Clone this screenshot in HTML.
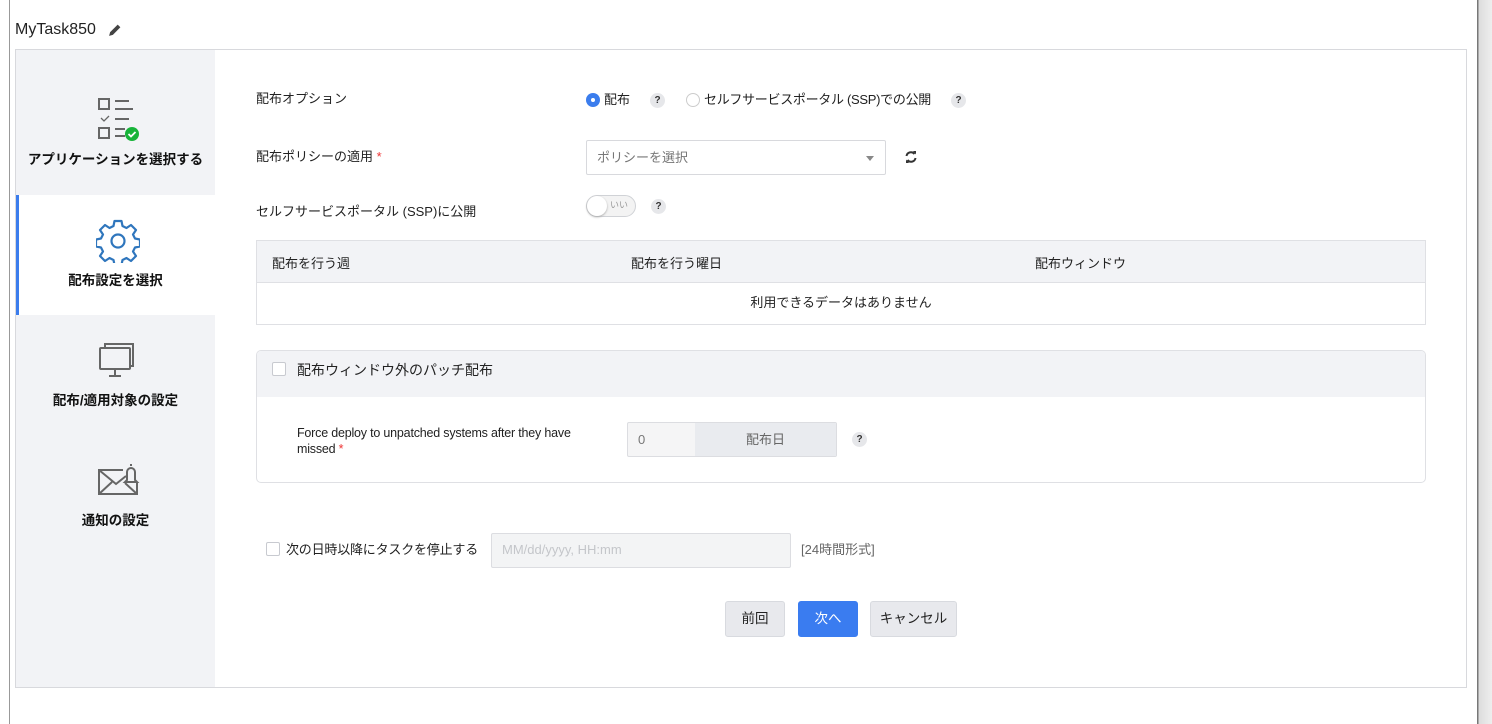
<!DOCTYPE html>
<html><head><meta charset="utf-8"><style>
*{box-sizing:border-box;margin:0;padding:0}
body{width:1492px;height:724px;background:#fff;position:relative;overflow:hidden;font-family:"Liberation Sans","Noto Sans CJK JP",sans-serif;color:#222;font-size:13px;line-height:15px}
.a{position:absolute}
.q{position:absolute;width:15px;height:15px;border-radius:50%;background:#e6e7ea;font-size:10px;font-weight:bold;text-align:center;line-height:15px;color:#333}
.nav{position:absolute;left:16px;width:199px;height:120px;text-align:center;font-weight:bold;font-size:13.5px;color:#111}
.nav svg{position:absolute;left:80px;top:44px}
.nav span{position:absolute;left:0;right:0}
.cb{position:absolute;width:14px;height:14px;border:1px solid #c8cad0;border-radius:2px;background:#fff}
.btn{position:absolute;top:601px;height:36px;border-radius:3px;text-align:center;line-height:34px;font-size:13.5px;border:1px solid #d8dadf;background:#e8e9ed}
</style></head><body>
<div class="a" style="left:9px;top:0;width:1px;height:724px;background:#999"></div>
<div class="a" style="left:1477px;top:0;width:15px;height:724px;background:linear-gradient(90deg,#777 0,#777 1px,#ddd 2px,#eee 100%)"></div>
<div class="a" style="left:15px;top:21px;font-size:16px;line-height:18px;color:#222">MyTask850</div>
<svg class="a" style="left:108px;top:23px" width="14" height="14" viewBox="0 0 13 13"><path d="M1 12l1-3.5L9 1.5l2.5 2.5L4.5 11z" fill="#444"/></svg>
<div class="a" style="left:15px;top:49px;width:1452px;height:639px;border:1px solid #d8d9dd;background:#fff"></div>
<div class="a" style="left:16px;top:50px;width:199px;height:637px;background:#f2f3f6"></div>
<div class="a" style="left:16px;top:195px;width:199px;height:120px;background:#fff;border-left:3px solid #3b7ded"></div>

<div class="nav" style="top:75px">
<svg width="44" height="46" viewBox="0 0 44 46" style="left:81px;top:22px"><g fill="none" stroke="#666" stroke-width="2"><rect x="2" y="2" width="10" height="10"/><rect x="2" y="31" width="10" height="10"/><path d="M18 4h14M18 12h18M18 22h14M18 32h10M18 39h10"/><path d="M4 21l3 3 5-5" stroke-width="1.3"/></g><circle cx="35" cy="37" r="7" fill="#17b339"/><path d="M31.5 37l2.5 2.5 4.5-4.5" stroke="#fff" stroke-width="1.8" fill="none"/></svg>
<span style="top:77px">アプリケーションを選択する</span></div>

<div class="nav" style="top:195px">
<svg width="44" height="44" viewBox="0 0 44 44" style="left:80px;top:24px"><path d="M18.5 2h7l1 5 4 2 4.5-3 5 5-3 4.5 2 4 5 1v7l-5 1-2 4 3 4.5-5 5-4.5-3-4 2-1 5h-7l-1-5-4-2-4.5 3-5-5 3-4.5-2-4-5-1v-7l5-1 2-4-3-4.5 5-5 4.5 3 4-2z" fill="none" stroke="#2f76bd" stroke-width="2.2" stroke-linejoin="round"/><circle cx="22" cy="22" r="6.5" fill="none" stroke="#2f76bd" stroke-width="2.2"/></svg>
<span style="top:78px">配布設定を選択</span></div>

<div class="nav" style="top:315px">
<svg width="40" height="38" viewBox="0 0 40 38" style="left:82px;top:26px"><g fill="none" stroke="#666" stroke-width="2"><path d="M7 6V3h28v22h-3"/><rect x="2" y="7" width="30" height="21" rx="1"/><path d="M17 28v6M11 35h12"/></g></svg>
<span style="top:78px">配布/適用対象の設定</span></div>

<div class="nav" style="top:435px">
<svg width="44" height="36" viewBox="0 0 44 36" style="left:81px;top:26px"><g fill="none" stroke="#666" stroke-width="2"><path d="M26 9H2v24h38V22"/><path d="M2 9l17 14 10-8M2 33l13-12M40 33L28 22"/><path d="M30 19v-8a4 4 0 018 0v8l2 2H28z"/><path d="M34 3v2"/></g></svg>
<span style="top:78px">通知の設定</span></div>

<div class="a" style="left:256px;top:91px">配布オプション</div>
<div class="a" style="left:586px;top:93px;width:14px;height:14px;border-radius:50%;background:#3b7ded"></div>
<div class="a" style="left:591px;top:98px;width:4px;height:4px;border-radius:50%;background:#fff"></div>
<div class="a" style="left:604px;top:92px">配布</div>
<div class="q" style="left:650px;top:93px">?</div>
<div class="a" style="left:686px;top:93px;width:14px;height:14px;border-radius:50%;border:1px solid #ccc"></div>
<div class="a" style="left:704px;top:92px;letter-spacing:-0.3px">セルフサービスポータル (SSP)での公開</div>
<div class="q" style="left:951px;top:93px">?</div>

<div class="a" style="left:256px;top:149px">配布ポリシーの適用 <span style="color:#e33">*</span></div>
<div class="a" style="left:586px;top:140px;width:300px;height:35px;border:1px solid #d8d9dd;border-radius:2px"></div>
<div class="a" style="left:597px;top:150px;color:#777">ポリシーを選択</div>
<div class="a" style="left:866px;top:156px;border-left:4px solid transparent;border-right:4px solid transparent;border-top:5px solid #888"></div>
<svg class="a" style="left:904px;top:150px" width="14" height="14" viewBox="0 0 14 14"><g fill="none" stroke="#333" stroke-width="2"><path d="M2.5 6a4.5 4.5 0 018-2M11.5 8a4.5 4.5 0 01-8 2"/></g><path d="M9 1l3 0v3.5zM5 13H2V9.5z" fill="#333"/></svg>

<div class="a" style="left:256px;top:204px">セルフサービスポータル (SSP)に公開</div>
<div class="a" style="left:586px;top:195px;width:50px;height:22px;border:1px solid #d0d2d6;border-radius:11px;background:#f3f3f3"></div>
<div class="a" style="left:587px;top:196px;width:20px;height:20px;border-radius:50%;background:#fff;box-shadow:0 1px 2px #aaa"></div>
<div class="a" style="left:610px;top:199px;font-size:9px;line-height:12px;color:#999">いい</div>
<div class="q" style="left:651px;top:199px">?</div>

<div class="a" style="left:256px;top:240px;width:1170px;height:85px;border:1px solid #dfe0e4"></div>
<div class="a" style="left:257px;top:241px;width:1168px;height:42px;background:#f2f3f6;border-bottom:1px solid #dfe0e4"></div>
<div class="a" style="left:272px;top:256px">配布を行う週</div>
<div class="a" style="left:631px;top:256px">配布を行う曜日</div>
<div class="a" style="left:1035px;top:256px">配布ウィンドウ</div>
<div class="a" style="left:257px;top:295px;width:1168px;text-align:center">利用できるデータはありません</div>

<div class="a" style="left:256px;top:350px;width:1170px;height:133px;border:1px solid #dfe0e4;border-radius:5px;overflow:hidden"><div style="height:46px;background:#f2f3f6"></div></div>
<div class="cb" style="left:272px;top:362px"></div>
<div class="a" style="left:297px;top:362px;font-size:14px;line-height:16px">配布ウィンドウ外のパッチ配布</div>
<div class="a" style="left:297px;top:425px;font-size:12.5px;line-height:16px;letter-spacing:-0.2px">Force deploy to unpatched systems after they have<br>missed <span style="color:#e33">*</span></div>
<div class="a" style="left:627px;top:422px;width:210px;height:35px;border:1px solid #dcdde1;border-radius:2px;background:#f5f5f6"></div>
<div class="a" style="left:695px;top:423px;width:141px;height:33px;background:#e9ebef;text-align:center;line-height:33px;color:#666">配布日</div>
<div class="a" style="left:638px;top:432px;color:#777">0</div>
<div class="q" style="left:852px;top:432px">?</div>

<div class="cb" style="left:266px;top:542px"></div>
<div class="a" style="left:286px;top:542px;font-size:13px;letter-spacing:-0.2px">次の日時以降にタスクを停止する</div>
<div class="a" style="left:491px;top:533px;width:300px;height:35px;border:1px solid #dcdde1;border-radius:2px;background:#f3f4f5"></div>
<div class="a" style="left:502px;top:542px;color:#c4c6ca">MM/dd/yyyy, HH:mm</div>
<div class="a" style="left:801px;top:542px;color:#666">[24時間形式]</div>

<div class="btn" style="left:725px;width:60px">前回</div>
<div class="btn" style="left:798px;width:60px;background:#3a7cf0;border-color:#3a7cf0;color:#fff">次へ</div>
<div class="btn" style="left:870px;width:87px">キャンセル</div>
</body></html>
